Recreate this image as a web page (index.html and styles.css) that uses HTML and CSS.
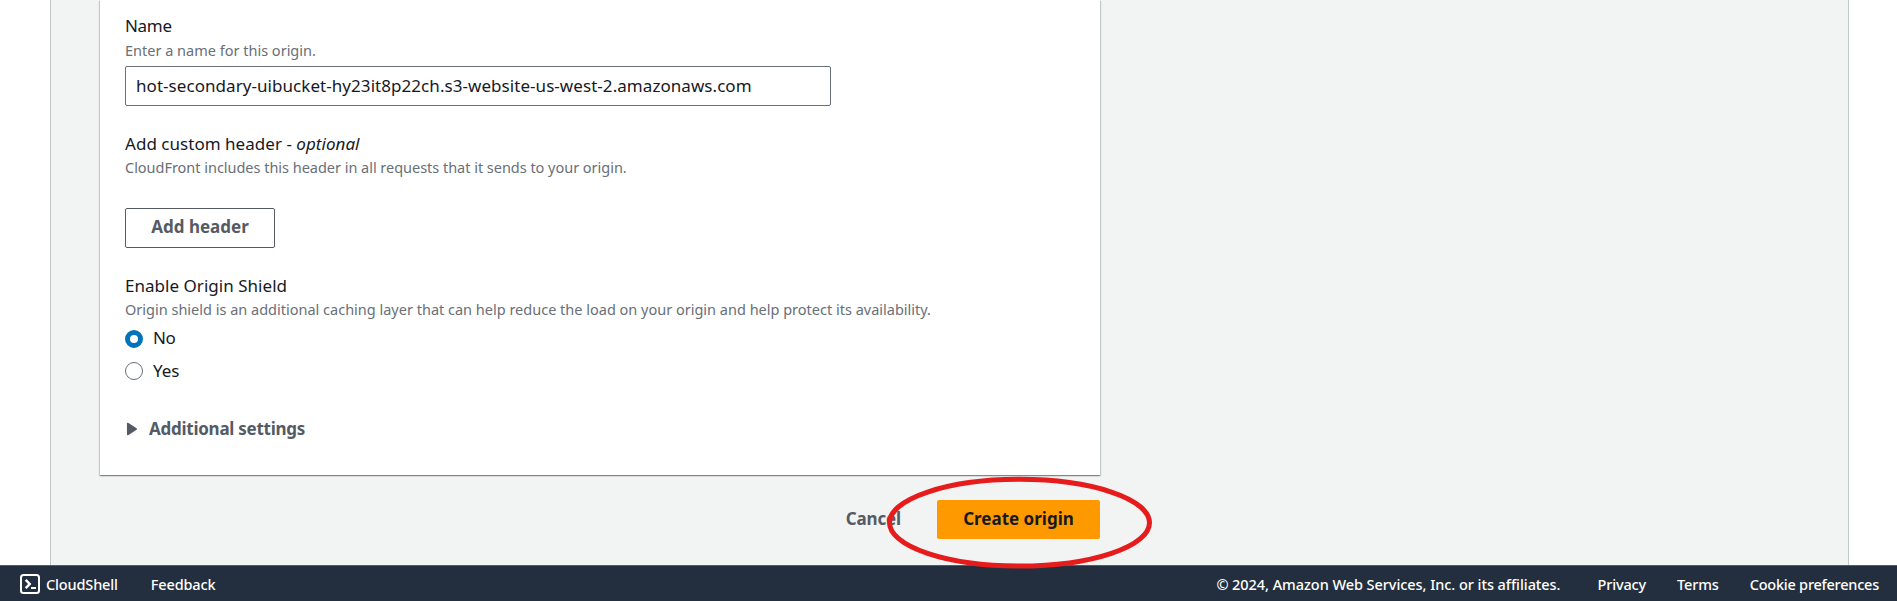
FILE: index.html
```html
<!DOCTYPE html>
<html lang="en">
<head>
<meta charset="utf-8">
<title>Create origin</title>
<link rel="stylesheet" href="styles.css">
</head>
<body>
<main class="page">
  <div class="content">
    <section class="card">
      <div class="field field-name">
        <div class="label t-name">Name</div>
        <p class="hint">Enter a name for this origin.</p>
        <div class="input">hot-secondary-uibucket-hy23it8p22ch.s3-website-us-west-2.amazonaws.com</div>
      </div>
      <div class="field field-header">
        <div class="label">Add custom header - <i>optional</i></div>
        <p class="hint t-cf">CloudFront includes this header in all requests that it sends to your origin.</p>
        <button class="btn">Add header</button>
      </div>
      <div class="field field-shield">
        <div class="label">Enable Origin Shield</div>
        <p class="hint">Origin shield is an additional caching layer that can help reduce the load on your origin and help protect its availability.</p>
        <div class="option"><span class="radio radio-on"></span><span class="t-no">No</span></div>
        <div class="option"><span class="radio"></span><span>Yes</span></div>
      </div>
      <div class="expander">
        <svg class="caret" width="12" height="14" viewBox="0 0 12 14"><path d="M1.700 1.500v11l8.500-5.500z" fill="#545b64" stroke="#545b64" stroke-width="1.500" stroke-linejoin="round"/></svg>
        <span class="t-additional">Additional settings</span>
      </div>
    </section>
    <div class="actions">
      <a class="cancel">Cancel</a>
      <button class="btn-primary">Create origin</button>
    </div>
  </div>
</main>
<footer class="footer">
  <svg class="shell" width="20" height="20" viewBox="0 0 20 20" fill="none" stroke="#fff" stroke-width="2"><rect x="1" y="1" width="18" height="18" rx="2.500"/><path d="M5.700 5.800l4 4.200-4 4.200" stroke-width="2.500"/><path d="M11 14h5"/></svg>
  <span>CloudShell</span>
  <span class="t-fb">Feedback</span>
  <span class="copyright">© 2024, Amazon Web Services, Inc. or its affiliates.</span>
  <span class="t-privacy">Privacy</span>
  <span class="t-terms">Terms</span>
  <span class="t-cookie">Cookie preferences</span>
</footer>
<svg class="highlight" width="267" height="94" viewBox="0 0 267 94"><ellipse cx="133.500" cy="46.700" rx="130" ry="43.400" fill="none" stroke="#e61b1c" stroke-width="5"/></svg>
</body>
</html>
```
FILE: styles.css
```css
* { box-sizing: border-box; }
body {
  margin: 0;
  height: 601px;
  overflow: hidden;
  display: flex;
  flex-direction: column;
  background: #fff;
  color: #16191f;
  font-family: "Noto Sans", "Open Sans", sans-serif;
  font-size: 17px;
  line-height: 26px;
  white-space: nowrap;
}
p { margin: 0; }
.page {
  height: 565px;
  margin: 0 48px 0 50px;
  padding-left: 49px;
  background: #f2f3f3;
  border-left: 1px solid #c0c8ca;
  border-right: 1px solid #c0c8ca;
}
.content { width: 1000px; }
.card {
  height: 475px;
  padding: 13px 25px 0;
  background: #fff;
  box-shadow: 0 1px 1px 0 rgba(0,28,36,.3), 1px 1px 1px 0 rgba(0,28,36,.15), -1px 1px 1px 0 rgba(0,28,36,.15);
}
.label { height: 26px; letter-spacing: 0.03px; }
.t-name { letter-spacing: -0.3px; }
.hint { color: #687078; font-size: 14.5px; line-height: 20px; height: 20px; }
.t-cf { letter-spacing: -0.025px; }
.field-name .hint { margin: 1px 0 6px; }
.input {
  width: 706px;
  height: 40px;
  padding: 6px 10px;
  border: 1px solid #687078;
  border-radius: 2px;
  letter-spacing: 0.055px;
}
.field-header { margin-top: 25px; }
.btn {
  display: block;
  width: 150px;
  height: 40px;
  margin-top: 31px;
  padding: 0 0 2px;
  border: 1px solid #545b64;
  border-radius: 2px;
  background: #fff;
  color: #545b64;
  font: bold 17px/26px "Noto Sans", "Open Sans", sans-serif;
}
.field-shield { margin-top: 25px; }
.field-shield .hint { margin: 0 0 6px; }
.option { display: flex; align-items: center; gap: 10px; height: 26px; }
.option + .option { margin-top: 7px; }
.t-no { letter-spacing: -0.4px; }
.radio {
  width: 18px;
  height: 18px;
  border: 1px solid #687078;
  border-radius: 50%;
  background: #fff;
}
.radio-on { margin-top: 2px; border: 5px solid #0073bb; }
.expander {
  display: flex;
  align-items: center;
  gap: 11px;
  margin-top: 32px;
  padding-left: 1px;
  color: #545b64;
  font-weight: bold;
}
.t-additional { letter-spacing: -0.26px; }
.actions {
  display: flex;
  justify-content: flex-end;
  align-items: center;
  gap: 36px;
  height: 39px;
  margin-top: 25px;
  font-weight: bold;
}
.cancel { color: #545b64; padding-bottom: 2px; letter-spacing: -0.15px; }
.btn-primary {
  width: 163px;
  height: 39px;
  padding: 0 0 2px;
  border: 0;
  border-radius: 2px;
  background: #ff9900;
  color: #16191f;
  font: bold 17px/26px "Noto Sans", "Open Sans", sans-serif;
}
.footer {
  display: flex;
  align-items: center;
  height: 36px;
  padding: 0 18px 0 20px;
  border-top: 1px solid #545b64;
  background: #232f3e;
  color: #fff;
  font-size: 14.5px;
  font-weight: 500;
  line-height: 20px;
  letter-spacing: -0.15px;
}
.shell { margin: 1px 6px 0 0; }
.t-fb { margin-left: 33px; }
.copyright { margin-left: auto; letter-spacing: -0.06px; }
.t-privacy { margin-left: 37px; }
.t-terms { margin-left: 31px; }
.t-cookie { margin-left: 31px; letter-spacing: -0.23px; }
.highlight { position: absolute; left: 886px; top: 476px; }
```
